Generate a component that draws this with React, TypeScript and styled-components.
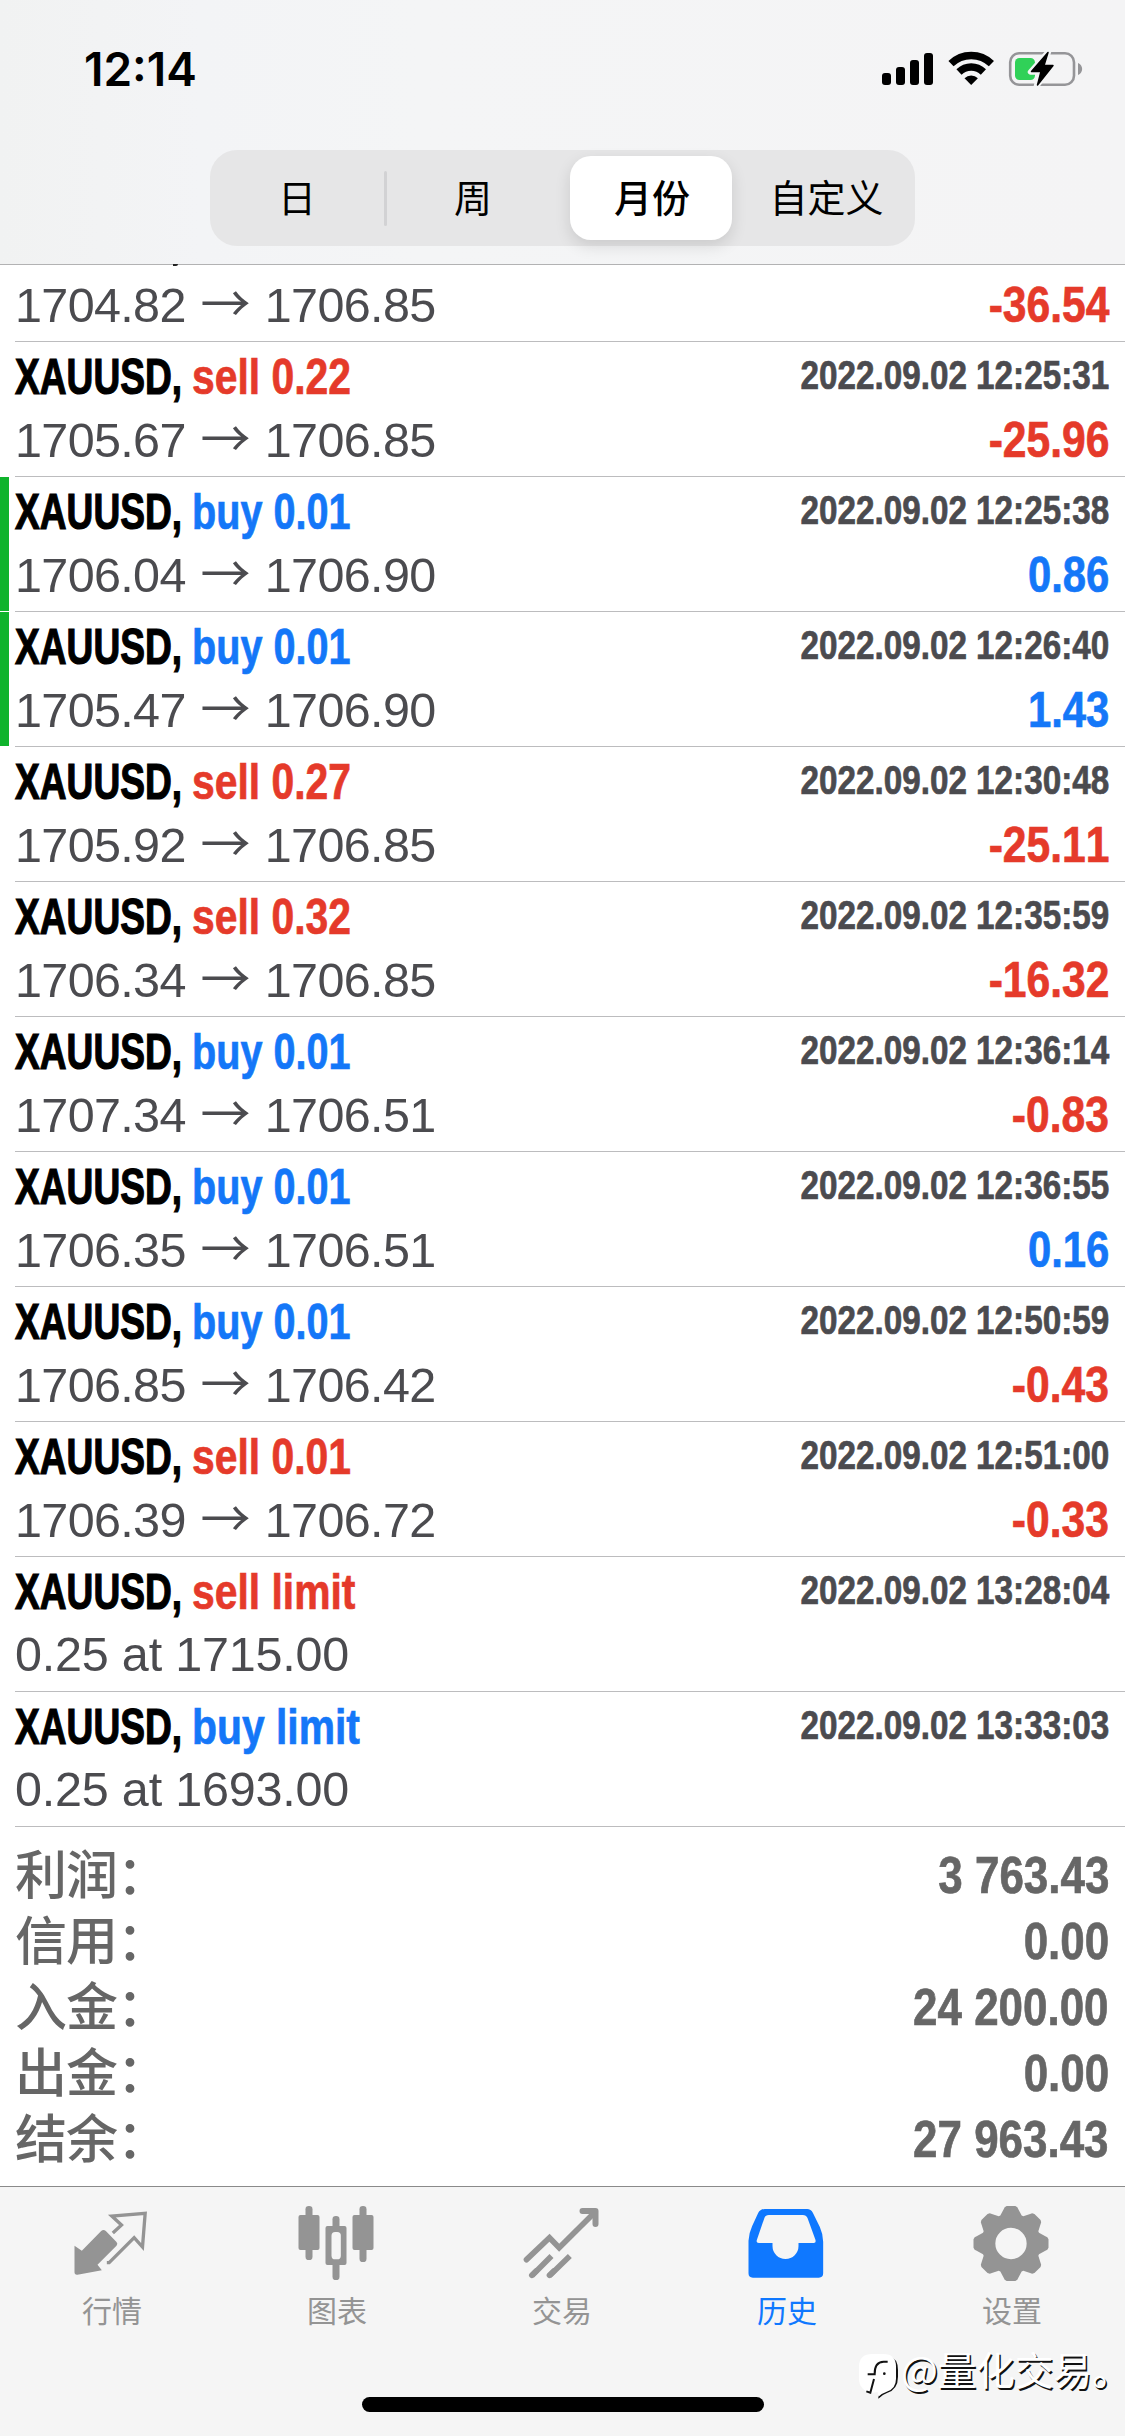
import React from "react";
import styled, { createGlobalStyle } from "styled-components";

const RED = "#e53a2a";
const BLUE = "#1477f8";
const GREY = "#949494";

const Global = createGlobalStyle`
  * { box-sizing: border-box; }
  html, body { margin: 0; padding: 0; background: #fff; }
`;

const Screen = styled.div`
  position: relative;
  display: flex;
  flex-direction: column;
  width: 1125px;
  height: 2436px;
  overflow: hidden;
  background: #fff;
  font-family: "Liberation Sans", "Noto Sans CJK SC", sans-serif;
  font-kerning: none;
  white-space: nowrap;
`;

const Header = styled.header`
  display: flex;
  flex-direction: column;
  height: 265px;
  flex: none;
  border-bottom: 1px solid #b2b2b3;
  background: linear-gradient(90deg, #f1f2f2 0, #f3f4f6 200px, #f4f5f6 420px, #f4f4f5 1125px);
`;

const StatusBar = styled.div`
  display: flex;
  justify-content: space-between;
  height: 150px;
  padding: 42px 42px 0 84px;
`;

const Clock = styled.div`
  font: 600 46px/54px Inter, "Liberation Sans", sans-serif;
  letter-spacing: 0;
  color: #000;
`;

const StatusIcons = styled.svg`
  width: 204px;
  height: 40px;
  margin-top: 6px;
`;

const Segments = styled.div`
  display: flex;
  align-items: center;
  width: 705px;
  height: 96px;
  margin-left: 210px;
  padding: 6px 0;
  border-radius: 27px;
  background: #e6e6e7;
`;

const Segment = styled.button<{ $w: number; $active?: boolean; $shift?: number }>`
  width: ${(p) => p.$w}px;
  height: 84px;
  padding: 0 0 4px ${(p) => p.$shift ?? 0}px;
  border: 0;
  border-radius: 21px;
  background: ${(p) => (p.$active ? "#fff" : "transparent")};
  box-shadow: ${(p) => (p.$active ? "0 6px 16px rgba(0,0,0,.12)" : "none")};
  color: #000;
  font-family: "Noto Sans CJK SC", sans-serif;
  font-size: 38px;
  font-weight: ${(p) => (p.$active ? 500 : 400)};
  line-height: 80px;
`;

const SegmentRule = styled.span`
  width: 3px;
  height: 55px;
  border-radius: 2px;
  background: #d2d2d4;
`;

const SegmentGap = styled.span`
  width: 11px;
`;

const List = styled.main`
  display: flex;
  flex-direction: column;
  flex: none;
`;

const Row = styled.article<{ $marked?: boolean }>`
  position: relative;
  height: 135px;
  padding: 1px 16px 0;
  &::after {
    content: "";
    position: absolute;
    left: 15px;
    right: 0;
    bottom: 0;
    height: 1px;
    background: #bcbcbe;
  }
  &::before {
    content: "";
    display: ${(p) => (p.$marked ? "block" : "none")};
    position: absolute;
    left: 0;
    top: 0;
    bottom: 1px;
    width: 9px;
    background: #0fb32c;
  }
`;

const ClippedRow = styled(Row)`
  height: 77px;
  padding-top: 10px;
`;

const CommaTail = styled.i`
  position: absolute;
  left: 173px;
  top: -1px;
  width: 5px;
  height: 2px;
  border-radius: 0 0 3px 0;
  background: #222;
`;

const Line = styled.div`
  display: flex;
  align-items: flex-start;
`;

const Condensed = styled.span<{ $x: number; $end?: boolean }>`
  display: inline-block;
  font-weight: 700;
  -webkit-text-stroke: 0.7px currentColor;
  transform: scaleX(${(p) => p.$x});
  transform-origin: ${(p) => (p.$end ? "right" : "left")} center;
`;

const SymbolName = styled(Condensed)`
  width: 177px;
  margin-left: -1px;
  font-size: 49.5px;
  line-height: 67px;
  color: #000;
  -webkit-text-stroke-width: 1.2px;
`;

const Order = styled(Condensed)<{ $color: string }>`
  font-size: 49.5px;
  line-height: 67px;
  color: ${(p) => p.$color};
`;

const Stamp = styled(Condensed)`
  margin-left: auto;
  font-size: 40.3px;
  line-height: 66px;
  color: #4b4b4f;
`;

const Price = styled.span<{ $spacing?: number }>`
  margin-left: -1px;
  font-size: 48.5px;
  line-height: 58px;
  letter-spacing: ${(p) => p.$spacing ?? -0.65}px;
  color: #4b4b4f;
`;

const Arrow = styled.span`
  display: inline-block;
  width: 79px;
  text-align: center;
  font-family: "Noto Sans CJK SC", sans-serif;
  font-size: 50px;
  line-height: 50px;
`;

const Profit = styled(Condensed)<{ $color: string }>`
  margin-left: auto;
  font-size: 49.5px;
  line-height: 59px;
  color: ${(p) => p.$color};
`;

const Summary = styled.section`
  height: 359px;
  flex: none;
  padding: 15px 16px 0;
  color: #666;
`;

const SummaryRow = styled.div`
  display: flex;
  justify-content: space-between;
  align-items: flex-start;
  height: 66px;
`;

const SummaryLabel = styled.span`
  margin-left: -1px;
  font: 500 52px/60px "Noto Sans CJK SC", sans-serif;
  letter-spacing: -1px;
`;

const SummaryValue = styled(Condensed)`
  font-size: 52.5px;
  line-height: 66px;
`;

const TabBar = styled.nav`
  display: flex;
  flex: 1;
  border-top: 1px solid #8a8a8a;
  background: #f5f5f5;
`;

const Tab = styled.a<{ $active?: boolean }>`
  display: flex;
  flex: 1;
  flex-direction: column;
  align-items: center;
  padding: 16px 1px 0 0;
  color: ${(p) => (p.$active ? "#0f78ff" : GREY)};
  font: 400 30px/40px "Noto Sans CJK SC", sans-serif;
`;

const TabIcon = styled.svg`
  width: 80px;
  height: 80px;
  margin-bottom: 6px;
`;

const HomeIndicator = styled.div`
  position: absolute;
  left: 362px;
  bottom: 24px;
  width: 402px;
  height: 15px;
  border-radius: 8px;
  background: #000;
`;

const Watermark = styled.div`
  position: absolute;
  left: 857px;
  top: 2346px;
  display: flex;
  align-items: flex-start;
  color: #fff;
  font: 400 39px/45px "Noto Sans CJK SC", sans-serif;
  letter-spacing: -0.4px;
  text-shadow: 1.5px 1.5px 0 #111;
`;

const WatermarkLogo = styled.svg`
  width: 44px;
  height: 50px;
  margin: 6px 0 0 0;
`;

type Trade = {
  side: "sell" | "buy";
  detail: string;
  time: string;
  open?: string;
  close?: string;
  profit?: string;
  note?: string;
  marked?: boolean;
};

const trades: Trade[] = [
  { side: "sell", detail: "0.22", time: "12:25:31", open: "1705.67", close: "1706.85", profit: "-25.96" },
  { side: "buy", detail: "0.01", time: "12:25:38", open: "1706.04", close: "1706.90", profit: "0.86", marked: true },
  { side: "buy", detail: "0.01", time: "12:26:40", open: "1705.47", close: "1706.90", profit: "1.43", marked: true },
  { side: "sell", detail: "0.27", time: "12:30:48", open: "1705.92", close: "1706.85", profit: "-25.11" },
  { side: "sell", detail: "0.32", time: "12:35:59", open: "1706.34", close: "1706.85", profit: "-16.32" },
  { side: "buy", detail: "0.01", time: "12:36:14", open: "1707.34", close: "1706.51", profit: "-0.83" },
  { side: "buy", detail: "0.01", time: "12:36:55", open: "1706.35", close: "1706.51", profit: "0.16" },
  { side: "buy", detail: "0.01", time: "12:50:59", open: "1706.85", close: "1706.42", profit: "-0.43" },
  { side: "sell", detail: "0.01", time: "12:51:00", open: "1706.39", close: "1706.72", profit: "-0.33" },
  { side: "sell", detail: "limit", time: "13:28:04", note: "0.25 at 1715.00" },
  { side: "buy", detail: "limit", time: "13:33:03", note: "0.25 at 1693.00" },
];

const totals = [
  ["利润：", "3 763.43"],
  ["信用：", "0.00"],
  ["入金：", "24 200.00"],
  ["出金：", "0.00"],
  ["结余：", "27 963.43"],
];

function PriceLine({ open, close, profit }: { open: string; close: string; profit: string }) {
  const loss = profit.startsWith("-");
  return (
    <Line>
      <Price>
        {open}
        <Arrow>→</Arrow>
        {close}
      </Price>
      <Profit $x={loss ? 0.86 : 0.845} $end $color={loss ? RED : BLUE}>
        {profit}
      </Profit>
    </Line>
  );
}

function TradeRow({ t }: { t: Trade }) {
  const orderScale = t.side === "buy" && t.detail !== "limit" ? 0.8 : 0.825;
  return (
    <Row $marked={t.marked}>
      <Line>
        <SymbolName $x={0.75}>XAUUSD,</SymbolName>
        <Order $x={orderScale} $color={t.side === "sell" ? RED : BLUE}>
          {t.side} {t.detail}
        </Order>
        <Stamp $x={0.825} $end>
          2022.09.02 {t.time}
        </Stamp>
      </Line>
      {t.note ? (
        <Line>
          <Price $spacing={-0.2}>{t.note}</Price>
        </Line>
      ) : (
        <PriceLine open={t.open!} close={t.close!} profit={t.profit!} />
      )}
    </Row>
  );
}

const gearTooth = [[-32, 84], [-22, 103], [-19, 109], [-13, 112.5], [13, 112.5], [19, 109], [22, 103], [32, 84]];
const gearPath =
  Array.from({ length: 8 })
    .flatMap((_, i) => {
      const a = (i * Math.PI) / 4;
      return gearTooth.map(([x, y]) => {
        const px = 559.5 + x * Math.cos(a) + y * Math.sin(a);
        const py = 190.5 + x * Math.sin(a) - y * Math.cos(a);
        return `${px.toFixed(1)} ${py.toFixed(1)}`;
      });
    })
    .reduce((d, p, i) => d + (i ? "L" : "M") + p, "") +
  "ZM606.5 190.5a47 47 0 1 0-94 0a47 47 0 1 0 94 0Z";

export default function App() {
  return (
    <Screen>
      <Global />
      <Header>
        <StatusBar>
          <Clock>12:14</Clock>
          <StatusIcons viewBox="879 48 204 40">
            <rect x="882" y="73" width="9" height="12" rx="3" />
            <rect x="896" y="67" width="9" height="18" rx="3" />
            <rect x="910" y="60" width="9" height="25" rx="3" />
            <rect x="924" y="53" width="9" height="32" rx="3" />
            <g fill="none" stroke="#000" strokeWidth="7.4">
              <path d="M951 63.7a29 29 0 0 1 40.400 0" />
              <path d="M959 72a17.500 17.500 0 0 1 24.400 0" />
            </g>
            <path d="M964.500 78.200a9.600 9.600 0 0 1 13.400 0L971.200 85Z" />
            <rect x="1010.200" y="53.200" width="63.800" height="31.600" rx="9" fill="none" stroke="#959598" strokeWidth="2.600" />
            <path d="M1078 63c5.500 2 5.500 10 0 12Z" fill="#959598" />
            <rect x="1015" y="58" width="20" height="22" rx="4.500" fill="#30d158" />
            <path
              d="M1048.500 51.500L1030.500 72h9.500l-3.500 14L1053.500 65h-9Z"
              stroke="#f4f5f6"
              strokeWidth="5.500"
              strokeLinejoin="round"
              fill="#f4f5f6"
            />
            <path d="M1048 52.500L1031.500 71.500h9.500l-3.500 13.500L1053 65.500h-9Z" stroke="#000" strokeWidth="1.500" strokeLinejoin="round" />
          </StatusIcons>
        </StatusBar>
        <Segments>
          <Segment $w={174}>日</Segment>
          <SegmentRule />
          <Segment $w={172}>周</Segment>
          <SegmentGap />
          <Segment $w={162} $active $shift={2}>
            月份
          </Segment>
          <Segment $w={183} $shift={6}>
            自定义
          </Segment>
        </Segments>
      </Header>

      <List>
        <ClippedRow>
          <CommaTail />
          <PriceLine open="1704.82" close="1706.85" profit="-36.54" />
        </ClippedRow>
        {trades.map((t) => (
          <TradeRow key={t.time} t={t} />
        ))}
      </List>

      <Summary>
        {totals.map(([label, value]) => (
          <SummaryRow key={label}>
            <SummaryLabel>{label}</SummaryLabel>
            <SummaryValue $x={0.837} $end>
              {value}
            </SummaryValue>
          </SummaryRow>
        ))}
      </Summary>

      <TabBar>
        <Tab>
          <TabIcon viewBox="97.5 69 240 240">
            <path
              fill="currentColor"
              d="M105 197L127 212L185 153Q192 147 199 153L231 186Q236 191 231 197L174 254L187 271L114 284Q105 285 105 276Z"
            />
            <path fill="none" stroke="currentColor" strokeWidth="10" d="M220 159L246 135L217 108L317 100L309 201L284 173L209 248H202" />
          </TabIcon>
          行情
        </Tab>
        <Tab>
          <TabIcon viewBox="772.5 69 240 240" fill="currentColor">
            <rect x="798" y="78" width="21" height="162" rx="10" />
            <rect x="777" y="105" width="63" height="105" rx="6" />
            <rect x="879" y="108" width="21" height="192" rx="10" />
            <rect x="858" y="138" width="63" height="117" rx="6" />
            <rect x="876" y="156" width="28" height="82" rx="11" fill="#f5f5f5" />
            <rect x="960" y="78" width="21" height="168" rx="10" />
            <rect x="939" y="105" width="63" height="105" rx="6" />
          </TabIcon>
          图表
        </Tab>
        <Tab>
          <TabIcon viewBox="127.5 69 240 240" fill="none" stroke="currentColor" strokeWidth="17">
            <path strokeLinecap="round" d="M141 239L210 173L239 203L346 97" />
            <path strokeLinecap="round" strokeLinejoin="round" strokeWidth="18" d="M309 93H348V132" />
            <path d="M157 287L216 228M210 287L271 228" />
            <path strokeLinecap="round" d="M157 286L170 273M210 286L223 273" />
          </TabIcon>
          交易
        </Tab>
        <Tab $active>
          <TabIcon viewBox="802.5 69 240 240">
            <path
              fill="currentColor"
              fillRule="evenodd"
              d="M807 182Q808 160 818 138L836 99Q842 87 856 87H983Q994 87 1000 98L1021 141Q1031 163 1031 185V280Q1031 293 1018 293H820Q807 293 807 280ZM868 105H970Q980 105 984 114L1008 180Q1010 189 1003 189H957V198A39 39 0 0 1 879 198V189H838Q829 189 832 180L855 113Q858 105 868 105Z"
            />
          </TabIcon>
          历史
        </Tab>
        <Tab>
          <TabIcon viewBox="442.5 69 240 240">
            <path fill="currentColor" fillRule="evenodd" d={gearPath} />
          </TabIcon>
          设置
        </Tab>
      </TabBar>

      <HomeIndicator />
      <Watermark>
        <WatermarkLogo viewBox="96 516 132 150">
          <path fill="#111" d="M190 528Q219 534 219 570V590Q219 628 186 639Q170 645 160 656V600Z" />
          <path fill="#fff" d="M102 560Q102 522 142 522H175Q213 522 213 560V596Q213 626 185 635Q168 641 160 650L158 636L140 639Q102 630 102 596Z" />
          <path fill="none" stroke="#111" strokeWidth="6" d="M128 583H149Q148 546 176 545H188M147 597L136 638L124 634" />
          <circle cx="178" cy="581" r="4" fill="#111" />
        </WatermarkLogo>
        @量化交易。
      </Watermark>
    </Screen>
  );
}
